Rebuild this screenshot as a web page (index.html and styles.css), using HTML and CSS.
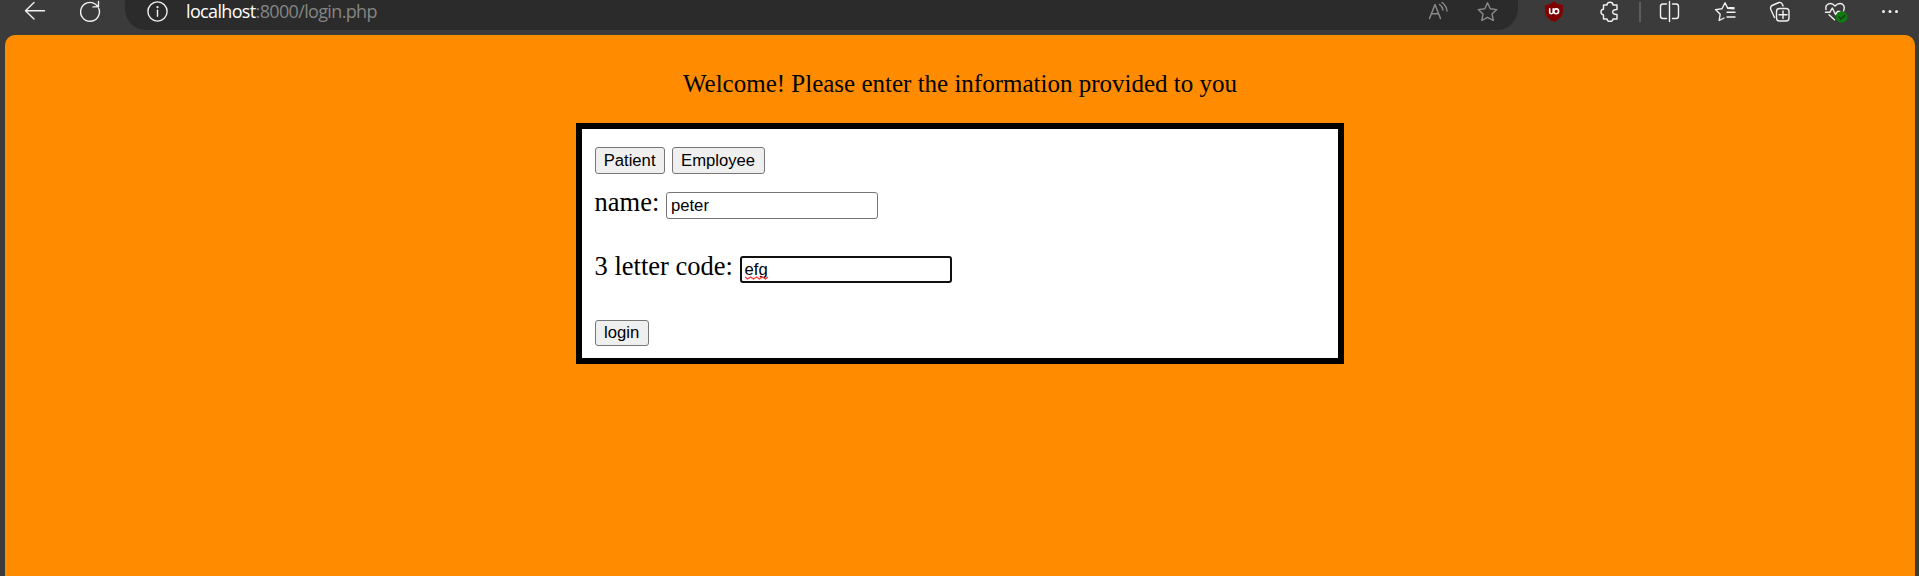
FILE: index.html
```html
<!DOCTYPE html>
<html lang="en">
<head>
<meta charset="utf-8">
<title>Login</title>
<link rel="stylesheet" href="styles.css">
</head>
<body>
<header class="toolbar">
  <svg class="nav" width="125" height="35" viewBox="0 0 125 35">
    <path d="M44.500 10.800H25.500M34 2.500L25.500 10.800L34 19"/>
    <path d="M98.800 8.500A9.400 9.400 0 1 1 95.500 4.200L98.300 6.700M98.500 1.500V6.900H93"/>
  </svg>
  <div class="address">
    <svg class="info" width="22" height="23" viewBox="0 0 22 23">
      <circle cx="11.500" cy="11.500" r="9.600"/>
      <path d="M11.500 10.200V16.200"/>
      <circle class="dot" cx="11.500" cy="7.200" r="1.100"/>
    </svg>
    <span class="url"><span class="host">localhost</span>:8000/login.php</span>
    <svg class="page-actions" width="90" height="30" viewBox="0 0 90 30">
      <path d="M9.500 18.500L15 4.500L20.500 18.500M11.400 13.800H18.600M19.500 4.500A8 8 0 0 1 23 10M22 2.500A12 12 0 0 1 27 11"/>
      <path d="M67.500 2.800L70.300 8.700L76.800 9.600L72 14.100L73.300 20.500L67.500 17.300L61.800 20.500L63 14.100L58.300 9.600L64.800 8.700Z"/>
    </svg>
  </div>
  <svg class="tools" width="401" height="35" viewBox="1518 0 401 35">
    <path class="shield" d="M1554 1.500Q1558 5 1563 5V11Q1563 18 1554 22Q1545 18 1545 11V5Q1550 5 1554 1.500Z"/>
    <path class="mark" d="M1549.700 8.800V12Q1549.700 13.700 1551.400 13.700T1553.200 12V8.800"/>
    <circle class="mark" cx="1556.200" cy="11.300" r="2.400"/>
    <path d="M1604 5H1607Q1607 2.300 1610 2.300T1613 5H1617V9.500Q1612.700 9.300 1612.700 12T1617 14.500V19H1613Q1613 21.400 1610 21.400T1607 19H1603.500V15Q1601 14.600 1601 12T1603.500 9.300V5Z"/>
    <path class="divider" d="M1640 2V22"/>
    <path d="M1666.500 4H1663Q1660.500 4 1660.500 6.500V16Q1660.500 18.500 1663 18.500H1666.500M1672.500 4H1676Q1678.500 4 1678.500 6.500V16Q1678.500 18.500 1676 18.500H1672.500M1669.500 1.500V21.500"/>
    <path d="M1734 8.800L1727.800 8.400L1725 2.800L1722 8.700L1715.500 9.600L1720.200 14.200L1719.200 20.500L1724 18M1729 7.800H1734M1727 12.300H1735M1727 17H1735"/>
    <path d="M1774.500 17.500L1770.800 9.500Q1770 6.500 1772 5.500L1779 2.500Q1781.500 1.800 1782.500 4.500L1783 6M1779.500 8.500H1786Q1789 8.500 1789 11.500V18Q1789 21 1786 21H1779.500Q1776.500 21 1776.500 18V11.500Q1776.500 8.500 1779.500 8.500ZM1783 11V18.500M1779 14.700H1787"/>
    <path d="M1826 9.500Q1825 5.500 1828.500 3.800Q1832 2.500 1835 6Q1839 2 1842.500 4.200Q1845.500 6.700 1843.500 11M1825.500 12.300H1829.800L1832.300 8L1835.500 14.500L1837.500 11.500H1840M1829 14.700L1834.500 19.700"/>
    <circle class="ok" cx="1841.700" cy="17" r="5.800"/>
    <path class="check" d="M1839 17L1841 19L1844.800 15.200"/>
    <g class="dots"><circle cx="1883.500" cy="11.500" r="1.500"/><circle cx="1890" cy="11.500" r="1.500"/><circle cx="1896.500" cy="11.500" r="1.500"/></g>
  </svg>
</header>
<main class="page">
  <p class="welcome">Welcome! Please enter the information provided to you</p>
  <section class="card">
    <div class="roles"><button class="btn patient">Patient</button><button class="btn employee">Employee</button></div>
    <label class="field">name: <input class="input" type="text" value="peter"></label>
    <label class="field code">3 letter code: <span class="input focused"><span class="misspelt">efg</span><svg class="squiggle" width="24" height="4" viewBox="0 0 24 4"><path d="M0 1L2.500 3L5.500 1L8.500 3L11.500 1L14.500 3L17.500 1L20.500 3L23 1"/></svg></span></label>
    <button class="btn login">login</button>
  </section>
</main>
</body>
</html>
```
FILE: styles.css
```css
* { box-sizing: border-box; }
body { margin: 0; height: 576px; overflow: hidden; background: #3b3b3b; font-family: "Liberation Serif", "Times New Roman", serif; color: #000; }
.toolbar { display: flex; height: 35px; }
.toolbar svg { fill: none; stroke: #f2f2f2; stroke-width: 1.4; stroke-linecap: round; stroke-linejoin: round; flex: none; }
.address { display: flex; align-items: flex-start; width: 1393px; height: 30px; background: #2b2b2b; border-radius: 0 0 20px 20px / 0 0 22px 22px; padding-left: 21px; }
.toolbar .dot { fill: #f2f2f2; stroke: none; }
.url { flex: 1; margin-left: 18px; font: 18px/23px "Open Sans", "Noto Sans", sans-serif; color: #858585; letter-spacing: -0.65px; }
.host { color: #fff; }
.toolbar .page-actions { stroke: #8c8c8c; margin-right: 8px; }
.toolbar .shield { fill: #800000; stroke: #6b2020; stroke-width: 0.5; }
.toolbar .mark { stroke: #fff; stroke-width: 1.6; }
.toolbar .divider { stroke: #666; stroke-width: 1.6; stroke-linecap: butt; }
.toolbar .ok { fill: #107c10; stroke: none; }
.toolbar .check { stroke: #1b3b1b; }
.toolbar .dots { fill: #f2f2f2; stroke: none; }
.page { height: 541px; margin: 0 4px 0 5px; background: #ff8c00; border-radius: 10px 10px 0 0; padding-top: 34px; }
.welcome { margin: 0 0 25px; font-size: 25px; line-height: 29px; text-align: center; }
.card { width: 768px; height: 241px; margin: 0 auto; border: 6px solid #000; background: #fff; padding: 18px 13px 0 12.6px; }
.roles { display: flex; gap: 7px; margin-bottom: 18px; }
.btn { display: block; height: 27px; padding: 0; border: 1px solid #767676; border-radius: 3px; background: #efefef; color: #000; font: 16.67px "Liberation Sans", Arial, sans-serif; }
.patient { width: 70px; }
.employee { width: 93px; }
.login { width: 54px; height: 26px; }
.field { display: flex; height: 27px; font-size: 26.5px; line-height: 21px; white-space: pre; margin-bottom: 37px; }
.input { position: relative; width: 212px; height: 27px; margin: 0; padding: 1px 4px; border: 1px solid #767676; border-radius: 3px; background: #fff; color: #000; font: 16.67px/24px "Liberation Sans", Arial, sans-serif; }
.focused { border: 2px solid #101010; padding: 0 3px; }
.squiggle { position: absolute; left: 3px; top: 18px; fill: none; stroke: #f33; stroke-width: 1.1; }
```
